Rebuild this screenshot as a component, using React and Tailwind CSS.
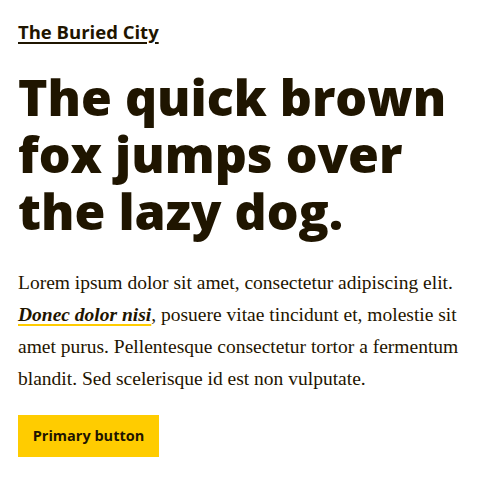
import React from 'react';

const App = () => {
  return (
    <div className="min-h-screen bg-white text-[#1f1500] px-[18px] pt-[20px]">
      {/* Site title */}
      <a
        href="#"
        className="inline-block font-['Open_Sans',sans-serif] font-bold text-[18.5px] leading-[24px] underline underline-offset-[3px] decoration-[1.5px]"
      >
        The Buried City
      </a>

      {/* Heading */}
      <h1 className="mt-[24px] font-['Open_Sans',sans-serif] font-extrabold text-[50px] leading-[57px]">
        The quick brown fox jumps over the lazy dog.
      </h1>

      {/* Body */}
      <p className="mt-[27px] font-['Liberation_Serif',serif] text-[19.5px] leading-[32px]">
        Lorem ipsum dolor sit amet, consectetur adipiscing elit.
        <br />
        <a
          href="#"
          className="font-bold italic underline decoration-[#ffcc00] decoration-2 underline-offset-[3px]"
        >
          Donec dolor nisi
        </a>
        , posuere vitae tincidunt et, molestie sit
        <br />
        amet purus. Pellentesque consectetur tortor a fermentum
        <br />
        blandit. Sed scelerisque id est non vulputate.
      </p>

      {/* Button */}
      <button className="mt-[20px] bg-[#ffcc00] h-[42px] w-[141px] font-['Open_Sans',sans-serif] font-bold text-[14.5px] text-[#1f1500]">
        Primary button
      </button>
    </div>
  );
};

export default App;
